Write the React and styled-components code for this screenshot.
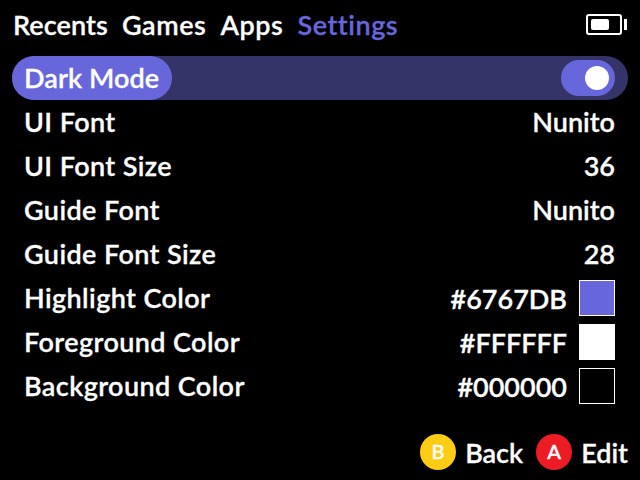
import React from 'react'
import styled, { createGlobalStyle } from 'styled-components'

const Global = createGlobalStyle`
    html, body { margin: 0; padding: 0; background: #000; }
    body {
        font-family: "Lato", "Open Sans", sans-serif;
        color: #fff;
        -webkit-text-stroke: 0.3px currentColor;
    }
`

const Screen = styled.div`
    width: 640px;
    height: 480px;
    background: #000;
    overflow: hidden;
    display: flex;
    flex-direction: column;
`

const TopBar = styled.div`
    height: 56px;
    padding: 0 13px 4px 13px;
    box-sizing: border-box;
    display: flex;
    align-items: center;
    justify-content: space-between;
`

const Tabs = styled.div`
    display: flex;
    gap: 14px;
    margin-top: -3px;
`

const Tab = styled.div`
    font-size: 27px;
    font-weight: 600;
    letter-spacing: 0.55px;
    color: ${p => (p.$active ? '#6767DB' : '#fff')};
    &:first-child {
        letter-spacing: 0.1px;
    }
`

const List = styled.div`
    display: flex;
    flex-direction: column;
    padding: 0 12px;
`

const Row = styled.div`
    height: 44px;
    display: flex;
    align-items: center;
    justify-content: space-between;
    padding-right: 13px;
    border-radius: 22px;
    background: ${p => (p.$selected ? '#353469' : 'transparent')};
    font-size: 27px;
    font-weight: 600;
`

const Label = styled.div`
    height: 42px;
    padding: 0 13px 2px 12px;
    display: flex;
    align-items: center;
    letter-spacing: ${p => (p.$selected ? '0.1px' : '0.4px')};
    border-radius: 22px;
    background: ${p => (p.$selected ? '#6767DB' : 'transparent')};
`

const Value = styled.div`
    display: flex;
    align-items: center;
    gap: 12px;
    padding-bottom: ${p => (p.$plain ? '2px' : '0')};
`

const Swatch = styled.div`
    width: 36px;
    height: 36px;
    box-sizing: border-box;
    border: 1px solid #fff;
    background: ${p => p.$color};
`

const Track = styled.div`
    width: 54px;
    height: 36px;
    box-sizing: border-box;
    padding-right: 6px;
    border-radius: 18px;
    background: #6767DB;
    display: flex;
    align-items: center;
    justify-content: flex-end;
`

const Knob = styled.div`
    width: 24px;
    height: 24px;
    border-radius: 50%;
    background: #fff;
`

const Footer = styled.div`
    margin-top: auto;
    height: 52px;
    padding: 0 12px 4px 0;
    box-sizing: border-box;
    display: flex;
    align-items: center;
    justify-content: flex-end;
    gap: 13px;
`

const Hint = styled.div`
    display: flex;
    align-items: center;
    gap: 9px;
    font-size: 27px;
    font-weight: 600;
`

const Circle = styled.div`
    width: 36px;
    height: 36px;
    border-radius: 50%;
    background: ${p => p.$color};
    display: flex;
    align-items: center;
    justify-content: center;
    padding-bottom: 3px;
    box-sizing: border-box;
    font-size: 20px;
    font-weight: 600;
    color: ${p => p.$text};
`

const BatterySvg = styled.svg`
    margin-bottom: 3px;
`

const BatteryIcon = () => (
    <BatterySvg width="41" height="21" viewBox="0 0 41 21">
        <rect x="1" y="1" width="34" height="19" rx="2" fill="none" stroke="#fff" strokeWidth="2" />
        <rect x="5" y="5" width="18" height="11" rx="2" fill="#fff" />
        <rect x="38" y="5" width="3" height="11" fill="#fff" />
    </BatterySvg>
)

const settings = [
    { label: 'UI Font', value: 'Nunito' },
    { label: 'UI Font Size', value: '36' },
    { label: 'Guide Font', value: 'Nunito' },
    { label: 'Guide Font Size', value: '28' },
    { label: 'Highlight Color', value: '#6767DB', color: '#6767DB' },
    { label: 'Foreground Color', value: '#FFFFFF', color: '#FFFFFF' },
    { label: 'Background Color', value: '#000000', color: '#000000' },
]

const App = () => {
    return (
        <Screen>
            <Global />
            <TopBar>
                <Tabs>
                    <Tab>Recents</Tab>
                    <Tab>Games</Tab>
                    <Tab>Apps</Tab>
                    <Tab $active>Settings</Tab>
                </Tabs>
                <BatteryIcon />
            </TopBar>
            <List>
                <Row $selected>
                    <Label $selected>Dark Mode</Label>
                    <Track><Knob /></Track>
                </Row>
                {settings.map(s => (
                    <Row key={s.label}>
                        <Label>{s.label}</Label>
                        <Value $plain={!s.color}>
                            {s.value}
                            {s.color && <Swatch $color={s.color} />}
                        </Value>
                    </Row>
                ))}
            </List>
            <Footer>
                <Hint><Circle $color="#FFCC14" $text="#fff">B</Circle>Back</Hint>
                <Hint><Circle $color="#ED1C24" $text="#fff">A</Circle>Edit</Hint>
            </Footer>
        </Screen>
    )
}

export default App
